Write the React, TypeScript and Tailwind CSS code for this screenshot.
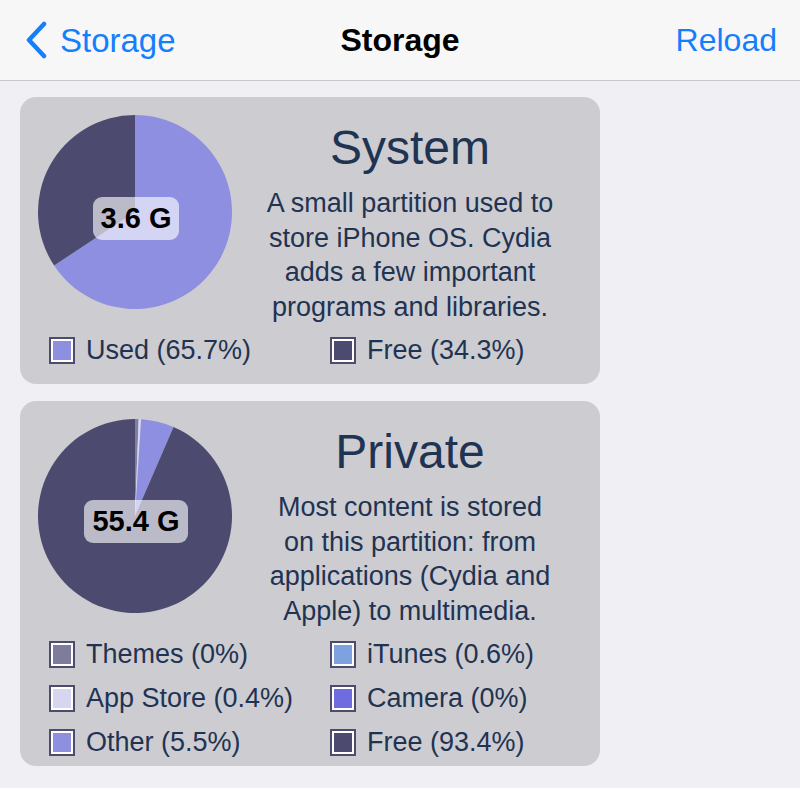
import React from "react";

type Slice = { frac: number; color: string };

function slicePath(cx: number, cy: number, r: number, s: number, e: number) {
  const a0 = s * 2 * Math.PI;
  const a1 = e * 2 * Math.PI;
  const x0 = cx + r * Math.sin(a0);
  const y0 = cy - r * Math.cos(a0);
  const x1 = cx + r * Math.sin(a1);
  const y1 = cy - r * Math.cos(a1);
  const large = e - s > 0.5 ? 1 : 0;
  return `M ${cx} ${cy} L ${x0} ${y0} A ${r} ${r} 0 ${large} 1 ${x1} ${y1} Z`;
}

function Pie({ slices, label }: { slices: Slice[]; label: string }) {
  let acc = 0;
  const paths = slices.map((s, i) => {
    const start = acc;
    acc += s.frac;
    if (s.frac <= 0) return null;
    return <path key={i} d={slicePath(97, 97, 97, start, acc)} fill={s.color} />;
  });
  return (
    <div className="relative w-[194px] h-[194px] shrink-0">
      <svg width="194" height="194" viewBox="0 0 194 194">
        {paths}
      </svg>
      <div className="absolute inset-0 flex items-center justify-center pt-[12px] pl-[2px]">
        <div className="rounded-[9px] bg-[rgba(255,255,255,0.62)] px-[8px] h-[43px] flex items-center text-[29px] font-bold text-black leading-none">
          {label}
        </div>
      </div>
    </div>
  );
}

function Swatch({ color }: { color: string }) {
  return (
    <div className="w-[26px] h-[27px] border-2 border-[#4d4b6e] shrink-0">
      <div className="w-full h-full border-2 border-white" style={{ backgroundColor: color }} />
    </div>
  );
}

type LegendItem = { color: string; text: string };

function Card({
  title,
  lines,
  slices,
  label,
  legend,
  pb,
}: {
  title: string;
  lines: string[];
  slices: Slice[];
  label: string;
  legend: LegendItem[];
  pb: string;
}) {
  return (
    <div className={`bg-[#cdccd1] rounded-[16px] w-[580px] pt-[18px] ${pb}`}>
      <div className="flex items-start pl-[18px] pr-[12px]">
        <Pie slices={slices} label={label} />
        <div className="flex-1 flex flex-col items-center pt-[5px] text-[#1f3352]">
          <div className="text-[48px] leading-[56px]">{title}</div>
          <div className="mt-[10px] text-[27px] leading-[34.7px] text-center">
            {lines.map((l, i) => (
              <div key={i} className="whitespace-nowrap">
                {l}
              </div>
            ))}
          </div>
        </div>
      </div>
      <div className="mt-[4px] pl-[29px] grid grid-cols-[281px_1fr]">
        {legend.map((it, i) => (
          <div key={i} className="h-[44px] flex items-center gap-[11px]">
            <Swatch color={it.color} />
            <span className="text-[27px] text-[#1f3352] whitespace-nowrap leading-none">{it.text}</span>
          </div>
        ))}
      </div>
    </div>
  );
}

const USED = "#8f8fe1";
const FREE = "#4c4b6f";

export default function App() {
  return (
    <div
      className="w-[800px] h-[788px] bg-[#efeff4] overflow-hidden"
      style={{ fontFamily: '"Liberation Sans", Arial, sans-serif' }}
    >
      <div className="h-[81px] bg-[#f7f7f8] border-b border-[#c8c7cc] grid grid-cols-[1fr_auto_1fr] items-center">
        <div className="flex items-center pl-[24px] text-[#157efb]">
          <svg width="24" height="38" viewBox="0 0 24 38" className="mr-[12px]">
            <polyline points="20,3 5,19 20,35" fill="none" stroke="#157efb" strokeWidth="4.5" strokeLinecap="round" strokeLinejoin="round" />
          </svg>
          <span className="text-[33px] leading-none">Storage</span>
        </div>
        <div className="text-[32px] font-bold text-black leading-none">Storage</div>
        <div className="flex justify-end pr-[23px] text-[32px] text-[#157efb] leading-none">Reload</div>
      </div>
      <div className="pl-[20px] pt-[16px] flex flex-col gap-[17px]">
        <Card
          title="System"
          lines={["A small partition used to", "store iPhone OS. Cydia", "adds a few important", "programs and libraries."]}
          slices={[
            { frac: 0.657, color: USED },
            { frac: 0.343, color: FREE },
          ]}
          label="3.6 G"
          legend={[
            { color: USED, text: "Used (65.7%)" },
            { color: FREE, text: "Free (34.3%)" },
          ]}
          pb="pb-[11px]"
        />
        <Card
          title="Private"
          lines={["Most content is stored", "on this partition: from", "applications (Cydia and", "Apple) to multimedia."]}
          slices={[
            { frac: 0.006, color: "#7c7f9f" },
            { frac: 0.004, color: "#d6d6f0" },
            { frac: 0.055, color: USED },
            { frac: 0.935, color: FREE },
          ]}
          label="55.4 G"
          legend={[
            { color: "#7e7c9c", text: "Themes (0%)" },
            { color: "#7ea1e0", text: "iTunes (0.6%)" },
            { color: "#d6d6f0", text: "App Store (0.4%)" },
            { color: "#6f6ce0", text: "Camera (0%)" },
            { color: USED, text: "Other (5.5%)" },
            { color: FREE, text: "Free (93.4%)" },
          ]}
          pb="pb-[1px]"
        />
      </div>
    </div>
  );
}
